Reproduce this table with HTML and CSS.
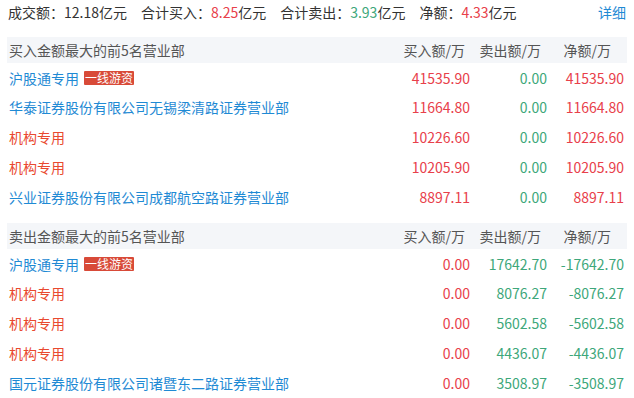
FILE: index.html
```html
<!DOCTYPE html>
<html lang="zh-CN">
<head>
<meta charset="utf-8">
<link rel="stylesheet" href="styles.css">
</head>
<body>
<div class="page">
  <div class="summary">
    <div class="stats">
      <span class="stat">成交额：12.18亿元</span>
      <span class="stat">合计买入：<span class="red">8.25</span>亿元</span>
      <span class="stat">合计卖出：<span class="green">3.93</span>亿元</span>
      <span class="stat">净额：<span class="red">4.33</span>亿元</span>
    </div>
    <a class="more">详细</a>
  </div>

  <div class="table">
    <div class="row head">
      <div class="name">买入金额最大的前5名营业部</div>
      <div class="num h-buy">买入额/万</div>
      <div class="num h-sell">卖出额/万</div>
      <div class="num h-net">净额/万</div>
    </div>
    <div class="row">
      <div class="name blue">沪股通专用<span class="tag">一线游资</span></div>
      <div class="num red">41535.90</div>
      <div class="num green">0.00</div>
      <div class="num red">41535.90</div>
    </div>
    <div class="row">
      <div class="name blue">华泰证券股份有限公司无锡梁清路证券营业部</div>
      <div class="num red">11664.80</div>
      <div class="num green">0.00</div>
      <div class="num red">11664.80</div>
    </div>
    <div class="row">
      <div class="name org">机构专用</div>
      <div class="num red">10226.60</div>
      <div class="num green">0.00</div>
      <div class="num red">10226.60</div>
    </div>
    <div class="row">
      <div class="name org">机构专用</div>
      <div class="num red">10205.90</div>
      <div class="num green">0.00</div>
      <div class="num red">10205.90</div>
    </div>
    <div class="row">
      <div class="name blue">兴业证券股份有限公司成都航空路证券营业部</div>
      <div class="num red">8897.11</div>
      <div class="num green">0.00</div>
      <div class="num red">8897.11</div>
    </div>
  </div>

  <div class="table second">
    <div class="row head">
      <div class="name">卖出金额最大的前5名营业部</div>
      <div class="num h-buy">买入额/万</div>
      <div class="num h-sell">卖出额/万</div>
      <div class="num h-net">净额/万</div>
    </div>
    <div class="row">
      <div class="name blue">沪股通专用<span class="tag">一线游资</span></div>
      <div class="num red">0.00</div>
      <div class="num green">17642.70</div>
      <div class="num green">-17642.70</div>
    </div>
    <div class="row">
      <div class="name org">机构专用</div>
      <div class="num red">0.00</div>
      <div class="num green">8076.27</div>
      <div class="num green">-8076.27</div>
    </div>
    <div class="row">
      <div class="name org">机构专用</div>
      <div class="num red">0.00</div>
      <div class="num green">5602.58</div>
      <div class="num green">-5602.58</div>
    </div>
    <div class="row">
      <div class="name org">机构专用</div>
      <div class="num red">0.00</div>
      <div class="num green">4436.07</div>
      <div class="num green">-4436.07</div>
    </div>
    <div class="row">
      <div class="name blue">国元证券股份有限公司诸暨东二路证券营业部</div>
      <div class="num red">0.00</div>
      <div class="num green">3508.97</div>
      <div class="num green">-3508.97</div>
    </div>
  </div>
</div>
</body>
</html>
```
FILE: styles.css
```css
html, body {
  margin: 0;
  padding: 0;
  background: #ffffff;
}
body {
  font-family: "Noto Sans CJK SC", "Noto Sans", sans-serif;
  font-size: 14px;
  color: #333333;
}
.page {
  width: 620px;
  margin-left: 7px;
}
.summary {
  display: flex;
  justify-content: space-between;
  align-items: center;
  height: 24px;
  padding: 0 1px 0 1px;
}
.stats {
  display: flex;
}
.stat {
  margin-right: 14px;
  white-space: nowrap;
}
.more {
  color: #1f8ad4;
  cursor: pointer;
}
.table {
  margin-top: 13px;
}
.table.second {
  margin-top: 11px;
}
.row {
  display: grid;
  grid-template-columns: 1fr 80px 77px 77px;
  align-items: center;
  height: 30px;
  padding: 0 3px 0 2px;
  white-space: nowrap;
}
.row.head {
  height: 26px;
  background: #f4f6f9;
  color: #555555;
}
.table > .row.head + .row {
  height: 29px;
}
.name {
  display: flex;
  align-items: center;
}
.num {
  text-align: right;
}
.h-buy { padding-right: 5px; }
.h-sell { padding-right: 6px; }
.h-net { padding-right: 13px; }
.blue { color: #1f8ad4; }
.org { color: #e9492f; }
.red { color: #e8404a; }
.green { color: #3da77a; }
.tag {
  display: inline-block;
  margin-left: 5px;
  background: #d84a38;
  color: #ffffff;
  font-size: 12px;
  line-height: 14px;
  height: 14px;
  padding: 0 1px;
  border-radius: 1px;
}
```
